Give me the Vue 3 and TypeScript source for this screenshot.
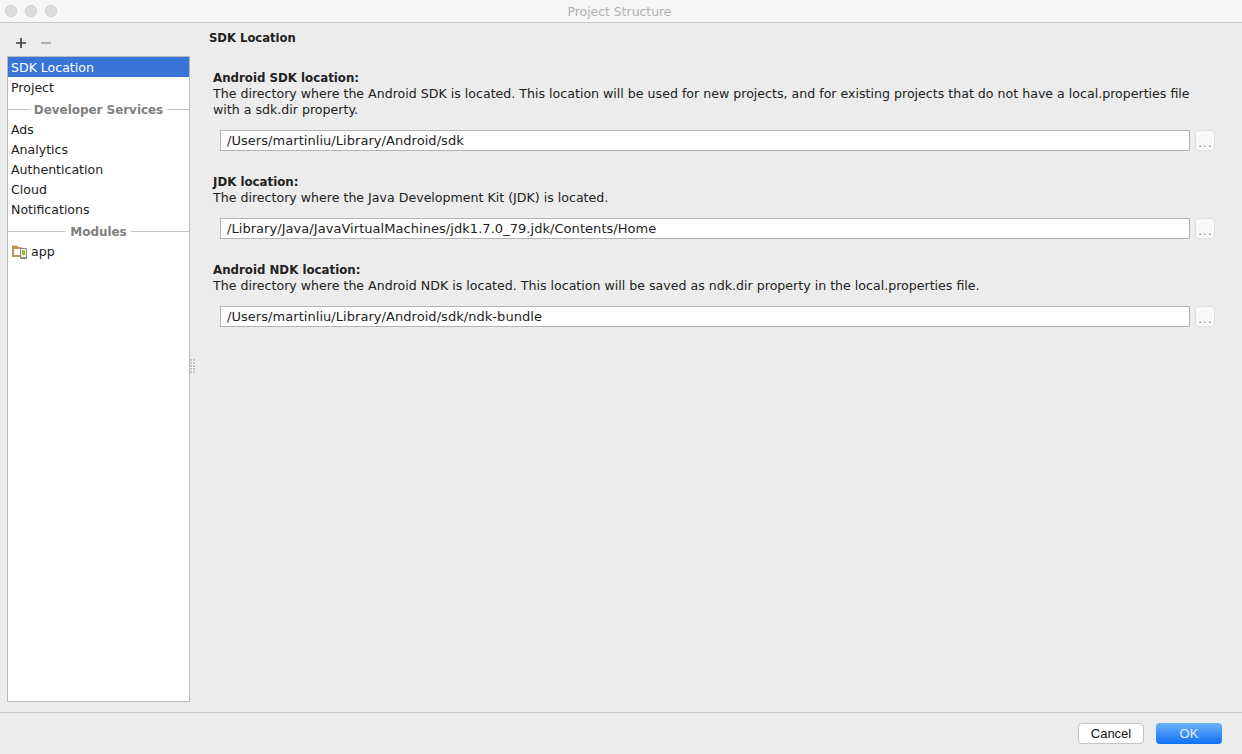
<script setup lang="ts">
type NavItem = { label: string; kind?: "sep" | "module"; selected?: boolean };

const nav: NavItem[] = [
  { label: "SDK Location", selected: true },
  { label: "Project" },
  { label: "Developer Services", kind: "sep" },
  { label: "Ads" },
  { label: "Analytics" },
  { label: "Authentication" },
  { label: "Cloud" },
  { label: "Notifications" },
  { label: "Modules", kind: "sep" },
  { label: "app", kind: "module" },
];

const locations = [
  {
    title: "Android SDK location:",
    text: "The directory where the Android SDK is located. This location will be used for new projects, and for existing projects that do not have a local.properties file with a sdk.dir property.",
    value: "/Users/martinliu/Library/Android/sdk",
  },
  {
    title: "JDK location:",
    text: "The directory where the Java Development Kit (JDK) is located.",
    value: "/Library/Java/JavaVirtualMachines/jdk1.7.0_79.jdk/Contents/Home",
  },
  {
    title: "Android NDK location:",
    text: "The directory where the Android NDK is located. This location will be saved as ndk.dir property in the local.properties file.",
    value: "/Users/martinliu/Library/Android/sdk/ndk-bundle",
  },
];
</script>

<template>
  <div class="window">
    <header class="titlebar">
      <div class="lights">
        <span class="light"></span>
        <span class="light"></span>
        <span class="light"></span>
      </div>
      <span class="title">Project Structure</span>
    </header>

    <div class="main">
      <aside class="sidebar">
        <div class="toolbar">
          <svg width="12" height="12" viewBox="0 0 12 12">
            <path d="M6 1v10M1 6h10" stroke="#3f3f3f" stroke-width="1.7" fill="none" />
          </svg>
          <svg width="12" height="12" viewBox="0 0 12 12">
            <path d="M1 6h10" stroke="#9a9a9a" stroke-width="1.5" fill="none" />
          </svg>
        </div>
        <ul class="list">
          <template v-for="item in nav" :key="item.label">
            <li v-if="item.kind === 'sep'" class="sep">
              <span>{{ item.label }}</span>
            </li>
            <li v-else class="row" :class="{ selected: item.selected }">
              <svg v-if="item.kind === 'module'" class="module-icon" width="16" height="16" viewBox="0 0 16 16">
                <path d="M0 1.500h5.500l1 1.500h3v2H2v6h6v2H0z" fill="#bd9560" />
                <rect x="2" y="5" width="6" height="6" fill="#fdfbf6" />
                <rect x="8" y="4" width="7" height="11" rx="1" fill="#8a8a8a" />
                <rect x="9" y="5" width="5" height="8" fill="#f2f2f2" />
                <rect x="10" y="6" width="3" height="5" fill="#9dbb2c" />
              </svg>
              {{ item.label }}
            </li>
          </template>
        </ul>
      </aside>

      <div class="splitter">
        <div class="grip">
          <i v-for="n in 10" :key="n"></i>
        </div>
      </div>

      <section class="content">
        <h1 class="heading">SDK Location</h1>
        <div v-for="loc in locations" :key="loc.title" class="location">
          <h2>{{ loc.title }}</h2>
          <p>{{ loc.text }}</p>
          <div class="path-row">
            <div class="path">{{ loc.value }}</div>
            <button class="browse" type="button">...</button>
          </div>
        </div>
      </section>
    </div>

    <footer class="footer">
      <button class="btn" type="button">Cancel</button>
      <button class="btn primary" type="button">OK</button>
    </footer>
  </div>
</template>

<style>
html,
body {
  margin: 0;
  background: #ececec;
}
</style>

<style scoped>
.window {
  width: 1242px;
  height: 754px;
  display: flex;
  flex-direction: column;
  background: #ececec;
  font-family: "DejaVu Sans", sans-serif;
  font-size: 12.55px;
  color: #222;
  overflow: hidden;
}

.titlebar {
  height: 23px;
  box-sizing: border-box;
  flex: none;
  display: flex;
  align-items: center;
  justify-content: center;
  position: relative;
  background: #f6f6f6;
  border-bottom: 1px solid #c8c8c8;
}

.lights {
  position: absolute;
  left: 5px;
  top: 5px;
  display: flex;
  gap: 8px;
}

.light {
  width: 12px;
  height: 12px;
  border-radius: 50%;
  background: #dcdcdc;
  box-shadow: inset 0 0 0 1px #d2d2d2;
}

.title {
  color: #b2b2b2;
  font-size: 12.400px;
  margin-left: -3px;
}

.main {
  flex: 1;
  display: flex;
  min-height: 0;
}

.sidebar {
  width: 183px;
  margin-left: 7px;
  flex: none;
  display: flex;
  flex-direction: column;
  padding-bottom: 10px;
}

.toolbar {
  height: 33px;
  flex: none;
  display: flex;
  align-items: center;
  gap: 13px;
  padding-left: 8px;
  padding-top: 7px;
  box-sizing: border-box;
}

.list {
  flex: 1;
  margin: 0;
  padding: 0;
  list-style: none;
  background: #fff;
  border: 1px solid #b9b9b9;
}

.row {
  height: 20px;
  box-sizing: border-box;
  line-height: 19px;
  padding: 1px 0 0 3px;
  display: flex;
  align-items: center;
  gap: 3px;
  white-space: nowrap;
}

.row.selected {
  background: #3875d7;
  color: #fff;
}

.module-icon {
  margin-left: 1px;
  flex: none;
}

.sep {
  height: 22px;
  box-sizing: border-box;
  padding-top: 3px;
  display: flex;
  align-items: center;
  gap: 4px;
  font-size: 12px;
  letter-spacing: -0.05px;
  font-weight: 700;
  color: #808080;
  white-space: nowrap;
}

.sep::before,
.sep::after {
  content: "";
  flex: 1;
  height: 1px;
  background: #c6c6c6;
}

.splitter {
  width: 6px;
  flex: none;
  display: flex;
  align-items: center;
  padding-bottom: 4px;
  box-sizing: border-box;
}

.grip {
  display: grid;
  grid-template-columns: 2px 2px;
  grid-auto-rows: 2px;
  gap: 1px;
  background: #f3f3f3;
}

.grip i {
  width: 2px;
  height: 2px;
  background: #c4c4c4;
}

.content {
  flex: 1;
  min-width: 0;
  padding: 7px 27px 0 13px;
}

.heading {
  margin: 0 0 24px;
  font-size: 11.600px;
  line-height: 16px;
  font-weight: 700;
}

.location {
  padding-left: 4px;
  margin-bottom: 23px;
}

.location h2 {
  margin: 0;
  font-size: 11.800px;
  line-height: 16px;
  font-weight: 700;
}

.location p {
  margin: 0 0 12px;
  font-size: 12.600px;
  line-height: 16px;
}

.path-row {
  display: flex;
  gap: 5px;
  padding-left: 7px;
}

.path {
  flex: 1;
  height: 21px;
  box-sizing: border-box;
  line-height: 19px;
  padding-left: 6px;
  font-size: 13px;
  letter-spacing: 0.05px;
  background: #fff;
  border: 1px solid #b4b4b4;
}

.browse {
  width: 20px;
  height: 21px;
  padding: 4px 0 0 1px;
  border: 1px solid #e0e0e0;
  border-radius: 4px;
  background: #f8f8f8;
  color: #8f8f8f;
  letter-spacing: 1px;
  font: 12px "DejaVu Sans", sans-serif;
}

.footer {
  height: 42px;
  flex: none;
  box-sizing: border-box;
  display: flex;
  justify-content: flex-end;
  gap: 12px;
  padding: 10px 20px 0 0;
  border-top: 1px solid #c8c8c8;
}

.btn {
  width: 66px;
  height: 21px;
  padding: 0;
  border: 1px solid #c4c4c4;
  border-radius: 4px;
  background: #fff;
  color: #111;
  font: 13px "Liberation Sans", sans-serif;
}

.btn.primary {
  border: none;
  background: linear-gradient(#6cb3fa, #0f6ff5);
  color: #e6f0fd;
}
</style>
